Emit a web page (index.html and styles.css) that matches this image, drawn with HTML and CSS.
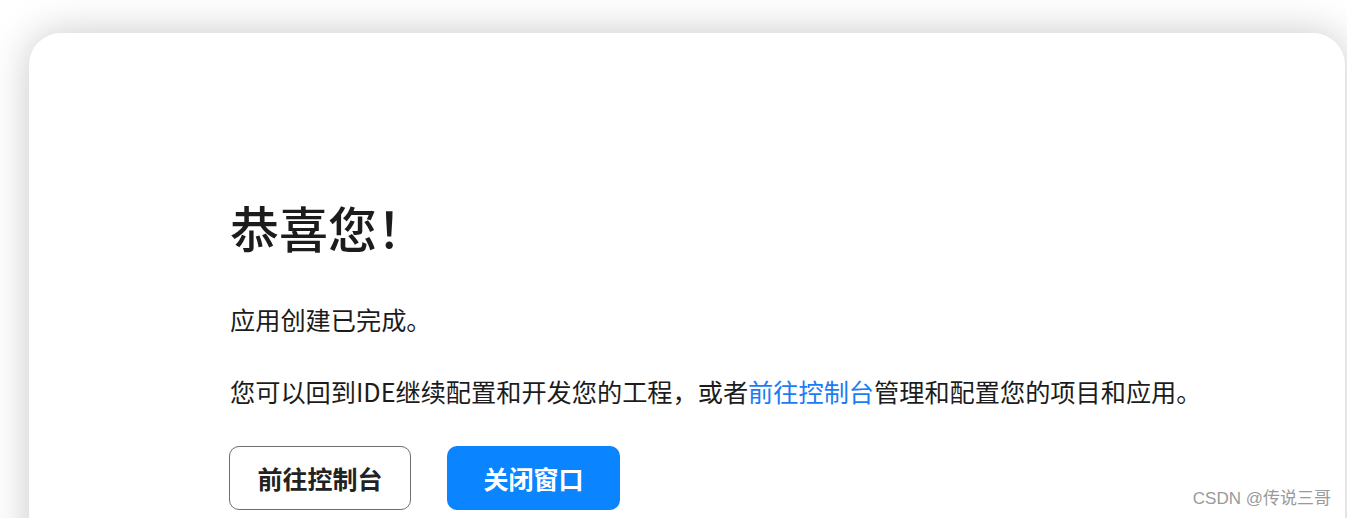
FILE: index.html
```html
<!DOCTYPE html>
<html lang="zh-CN">
<head>
    <meta charset="UTF-8">
    <meta name="viewport" content="width=device-width, initial-scale=1.0">
    <title>应用创建完成</title>
    <link rel="stylesheet" href="styles.css">
</head>
<body>
    <div class="card">
        <div class="content">
            <h1 class="title">恭喜您！</h1>
            <p class="line">应用创建已完成。</p>
            <p class="line desc">您可以回到IDE继续配置和开发您的工程，或者<a href="#" class="link">前往控制台</a>管理和配置您的项目和应用。</p>
            <div class="actions">
                <button class="btn btn-outline">前往控制台</button>
                <button class="btn btn-primary">关闭窗口</button>
            </div>
        </div>
    </div>
    <div class="watermark">CSDN @传说三哥</div>
</body>
</html>
```

FILE: styles.css
```css
html, body {
    margin: 0;
    height: 100%;
}
body {
    font-family: "Noto Sans CJK SC", "Noto Sans", sans-serif;
    background: #ffffff;
    color: #1c1c1c;
    overflow: hidden;
    position: relative;
}
.card {
    margin: 33px 2px 0 29px;
    min-height: 620px;
    background: #fff;
    border-radius: 32px;
    box-shadow: 0 0 40px rgba(0, 0, 0, 0.22);
}
.content {
    padding: 166px 0 0 200px;
}
.title {
    margin: 0 0 0 1px;
    font-size: 49px;
    font-weight: 500;
    line-height: 56px;
}
.line {
    margin: 46px 0 0 1px;
    font-size: 25.2px;
    line-height: 36px;
}
.desc {
    margin-top: 36px;
}
.link {
    color: #1a7cf5;
    text-decoration: none;
}
.actions {
    display: flex;
    gap: 36px;
    margin-top: 37px;
}
.btn {
    height: 64px;
    font-family: inherit;
    font-size: 25px;
    font-weight: 700;
    border-radius: 10px;
    cursor: pointer;
}
.btn-outline {
    width: 182px;
    background: #fff;
    color: #222;
    border: 1px solid #6e6e6e;
}
.btn-primary {
    width: 173px;
    background: #0a84ff;
    color: #fff;
    border: none;
}
.watermark {
    position: absolute;
    right: 16px;
    bottom: 9px;
    font-family: "Liberation Sans", "Noto Sans CJK SC", sans-serif;
    font-size: 17px;
    color: #9a9a9a;
}
```
